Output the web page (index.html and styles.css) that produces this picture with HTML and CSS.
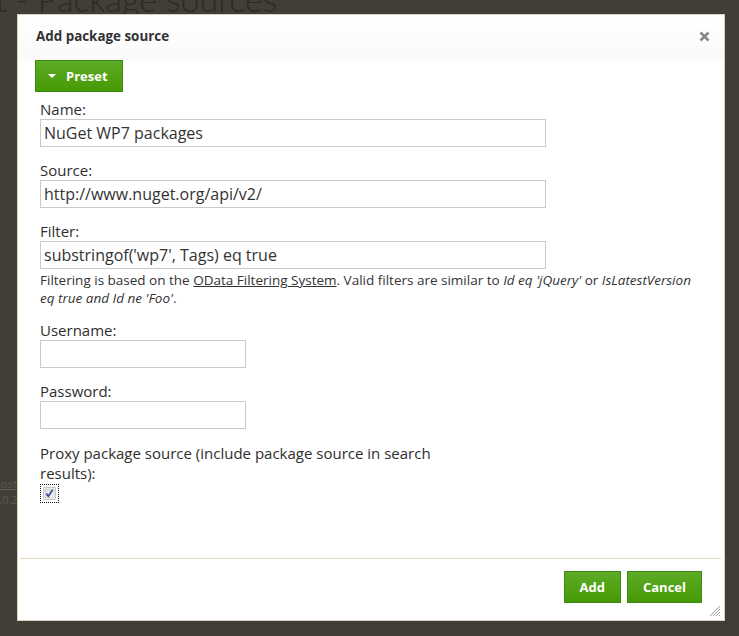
FILE: index.html
```html
<!DOCTYPE html>
<html>
<head>
<meta charset="utf-8">
<title>Add package source</title>
<link rel="stylesheet" href="styles.css">
</head>
<body>
<div class="page">
  <h1 class="page-title">Edit - Package sources</h1>
  <div class="page-side"><span class="side-link">Hoste</span><br>1.0.2</div>
</div>

<div class="modal" role="dialog">
  <div class="modal-header">
    <span class="modal-title">Add package source</span>
    <span class="close" aria-label="Close">
      <svg width="11" height="11" viewBox="0 0 11 11"><path d="M1.5 1.5 L9.5 9.5 M9.5 1.5 L1.5 9.5" stroke="#8a8882" stroke-width="2.6" stroke-linecap="butt"/></svg>
    </span>
  </div>

  <div class="modal-body">
    <button class="btn btn-preset" type="button"><span class="caret"></span>Preset</button>

    <form class="form">
      <div class="field first">
        <label class="field-label">Name:</label>
        <input class="text-input wide" type="text" value="NuGet WP7 packages">
      </div>
      <div class="field">
        <label class="field-label">Source:</label>
        <input class="text-input wide" type="text" value="http://www.nuget.org/api/v2/">
      </div>
      <div class="field">
        <label class="field-label">Filter:</label>
        <input class="text-input wide" type="text" value="substringof('wp7', Tags) eq true">
        <p class="help">Filtering is based on the <a href="#" class="help-link">OData Filtering System</a>. Valid filters are similar to <em>Id eq 'jQuery'</em> or <em>IsLatestVersion eq true and Id ne 'Foo'</em>.</p>
      </div>
      <div class="field">
        <label class="field-label">Username:</label>
        <input class="text-input narrow" type="text">
      </div>
      <div class="field">
        <label class="field-label">Password:</label>
        <input class="text-input narrow" type="password">
      </div>
      <div class="field proxy">
        <label class="field-label proxy-label">Proxy package source (include package source in search results):</label>
        <span class="checkbox">
          <svg width="13" height="13" viewBox="0 0 13 13">
            <defs>
              <linearGradient id="cbg" x1="0" y1="0" x2="1" y2="1">
                <stop offset="0" stop-color="#dcdcdc"/>
                <stop offset="1" stop-color="#f6f6f6"/>
              </linearGradient>
            </defs>
            <rect x="0.5" y="0.5" width="12" height="12" fill="#8f8f8f"/>
            <rect x="1" y="1" width="11" height="11" fill="#ffffff"/>
            <rect x="2" y="2" width="9" height="9" fill="url(#cbg)" stroke="#b7b7b7" stroke-width="0.6"/>
            <path d="M3.3 6.6 L5.4 9.2 L9.6 2.8" fill="none" stroke="#3a4fa0" stroke-width="1.7"/>
          </svg>
        </span>
      </div>
    </form>
  </div>

  <div class="modal-footer">
    <button class="btn" type="button">Add</button>
    <button class="btn" type="button">Cancel</button>
  </div>

  <span class="grip">
    <svg width="12" height="12" viewBox="0 0 12 12">
      <path d="M11 1 L1 11 M11 4 L4 11 M11 7 L7 11 M11 10 L10 11" stroke="#9a9a9a" stroke-width="1"/>
    </svg>
  </span>
</div>
</body>
</html>
```

FILE: styles.css
```css
* { box-sizing: border-box; }

html, body {
  margin: 0;
  padding: 0;
}

body {
  background: #413e37;
  font-family: "Open Sans", "DejaVu Sans", sans-serif;
  color: #333;
  width: 739px;
  height: 636px;
  overflow: hidden;
}

.page {
  position: relative;
  height: 636px;
}

.page-title {
  margin: -21px 0 0 -50px;
  font-family: "Lato", "Open Sans", sans-serif;
  font-weight: 300;
  font-size: 34px;
  line-height: 40px;
  color: #2b2924;
  white-space: nowrap;
}

.page-side {
  position: absolute;
  left: -7px;
  top: 497px;
  font-size: 11px;
  line-height: 16px;
  color: #5e5b53;
}

.side-link { text-decoration: underline; }

.modal {
  position: absolute;
  left: 17px;
  top: 14px;
  width: 708px;
  height: 607px;
  background: #fff;
  border: 1px solid #d9d1b9;
  display: flex;
  flex-direction: column;
}

.modal-header {
  display: flex;
  justify-content: space-between;
  align-items: center;
  padding: 13px 14px 16px 18px;
  background: linear-gradient(#ffffff, #fafafa);
}

.modal-title {
  font-size: 13.4px;
  font-weight: 700;
  line-height: 16px;
  color: #333;
}

.close {
  display: flex;
  width: 11px;
  height: 11px;
}

.modal-body {
  flex: 1;
  padding: 0 24px 0 17px;
}

.btn {
  display: inline-flex;
  align-items: center;
  height: 32px;
  padding: 0 15px;
  border: 1px solid #3d8a12;
  background: linear-gradient(#5dab26, #469a05);
  color: #fff;
  font-family: "Open Sans", "DejaVu Sans", sans-serif;
  font-size: 13px;
  font-weight: 700;
  border-radius: 0;
  cursor: pointer;
}

.btn-preset {
  padding: 0 14px 0 12px;
}

.caret {
  width: 0;
  height: 0;
  border-left: 4px solid transparent;
  border-right: 4px solid transparent;
  border-top: 4px solid #fff;
  margin-right: 10px;
  margin-top: -1px;
}

.form {
  margin: 0 0 0 5px;
}

.field { margin-top: 13px; }
.field.first { margin-top: 7px; }
.field.proxy { margin-top: 14px; }

.field-label {
  display: block;
  font-size: 15px;
  line-height: 20px;
  color: #2e2e2e;
}

.proxy-label { max-width: 410px; }

.text-input {
  display: block;
  height: 28px;
  border: 1px solid #cacaca;
  padding: 0 3px;
  font-family: "Open Sans", "DejaVu Sans", sans-serif;
  font-size: 16px;
  color: #333;
  background: #fff;
  outline: none;
}

.text-input.wide { width: 506px; }
.text-input.narrow { width: 206px; }

.help {
  margin: 2px 0 0;
  font-size: 13.5px;
  line-height: 18px;
  color: #333;
}

.help-link { color: #333; text-decoration: underline; }

.checkbox {
  display: inline-flex;
  align-items: center;
  justify-content: center;
  width: 19px;
  height: 19px;
  border: 1px dotted #111;
}

.modal-footer {
  display: flex;
  justify-content: flex-end;
  gap: 6px;
  margin: 0 3px 0 2px;
  border-top: 1px solid #e3dbc6;
  padding: 12px 19px 17px;
}

.grip {
  position: absolute;
  right: 3px;
  bottom: 3px;
  display: flex;
  width: 12px;
  height: 12px;
}
```
